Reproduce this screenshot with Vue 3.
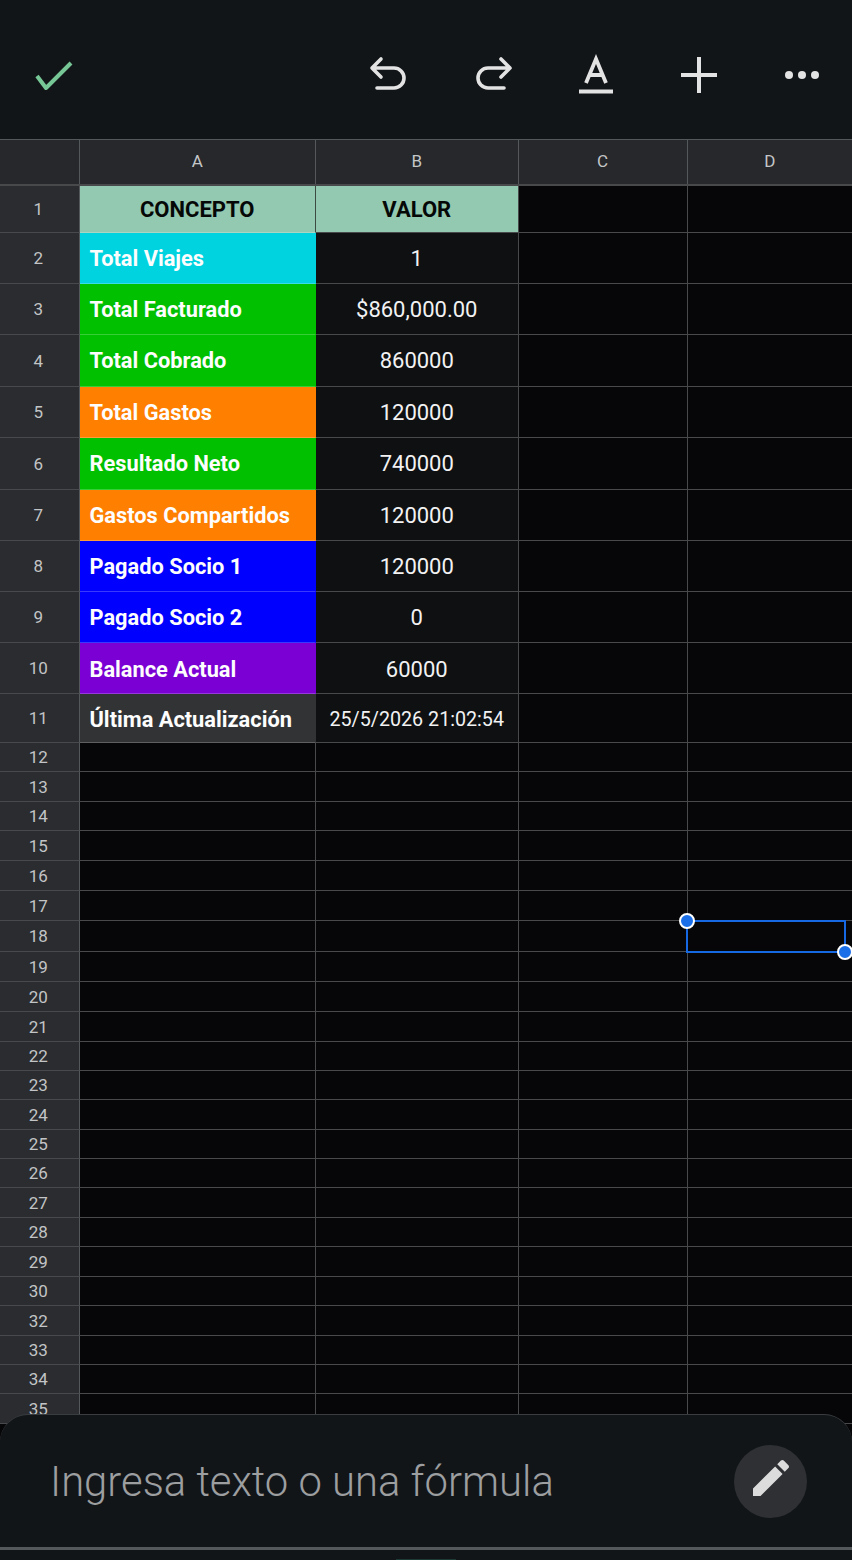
<script setup>
const columns = ['A', 'B', 'C', 'D']
const data = [
  { n: 1, h: 47, a: 'CONCEPTO', b: 'VALOR', tone: 'head' },
  { n: 2, h: 51, a: 'Total Viajes', b: '1', tone: 'cyan' },
  { n: 3, h: 51, a: 'Total Facturado', b: '$860,000.00', tone: 'green' },
  { n: 4, h: 52, a: 'Total Cobrado', b: '860000', tone: 'green' },
  { n: 5, h: 51, a: 'Total Gastos', b: '120000', tone: 'orange' },
  { n: 6, h: 52, a: 'Resultado Neto', b: '740000', tone: 'green' },
  { n: 7, h: 51, a: 'Gastos Compartidos', b: '120000', tone: 'orange' },
  { n: 8, h: 51, a: 'Pagado Socio 1', b: '120000', tone: 'blue' },
  { n: 9, h: 51, a: 'Pagado Socio 2', b: '0', tone: 'blue' },
  { n: 10, h: 51, a: 'Balance Actual', b: '60000', tone: 'purple', lower: true },
  { n: 11, h: 49, a: 'Última Actualización', b: '25/5/2026 21:02:54', tone: 'grey', small: true, lower: true }
]
const empty = [
  [12, 29], [13, 30], [14, 29], [15, 30], [16, 30], [17, 30], [18, 31], [19, 30], [20, 30], [21, 30],
  [22, 29], [23, 29], [24, 30], [25, 29], [26, 29], [27, 30], [28, 29], [29, 30], [30, 29], [32, 30],
  [33, 29], [34, 29], [35, 30]
].map(([n, h]) => ({ n, h }))
</script>

<template>
  <div class="page">
    <header class="toolbar">
      <svg class="tool-icons" width="852" height="139" viewBox="0 0 852 139" fill="none" stroke-linecap="round" stroke-linejoin="round">
        <path d="M37 76 L46 88 L71 63" stroke="#76c795" stroke-width="4" stroke-linecap="butt" />
        <g stroke="#e3e3e3" stroke-width="3.6">
          <path d="M381 59 L372 68 L381 77 M372 68 H394 A10 10 0 0 1 394 88 H377" />
          <path d="M501 59 L510 68 L501 77 M510 68 H488 A10 10 0 0 0 488 88 H504" />
          <path d="M586 83 L596 59 L606 83 M589 75 H603" stroke-width="3.8" stroke-linecap="butt" stroke-linejoin="miter" />
          <path d="M579 91.500 H613" stroke-width="4" stroke-linecap="butt" />
          <path d="M681 75 H717 M699 57 V93" stroke-width="4" stroke-linecap="butt" />
        </g>
        <g fill="#e3e3e3">
          <circle cx="789" cy="75" r="4" />
          <circle cx="802" cy="75" r="4" />
          <circle cx="815" cy="75" r="4" />
        </g>
      </svg>
    </header>

    <section class="sheet">
      <div class="row col-row">
        <div class="corner"></div>
        <div v-for="c in columns" :key="c" class="col-head">{{ c }}</div>
      </div>

      <div v-for="r in data" :key="r.n" class="row" :class="{ lower: r.lower }" :style="{ height: r.h + 'px' }">
        <div class="row-head">{{ r.n }}</div>
        <div class="cell cell-a" :class="r.tone">{{ r.a }}</div>
        <div class="cell cell-b" :class="[{ small: r.small }, r.tone === 'head' ? 'head' : '']">{{ r.b }}</div>
        <div class="cell blank"></div>
        <div class="cell blank"></div>
      </div>

      <div v-for="r in empty" :key="r.n" class="row" :style="{ height: r.h + 'px' }">
        <div class="row-head">{{ r.n }}</div>
        <div class="cell blank"></div>
        <div class="cell blank"></div>
        <div class="cell blank"></div>
        <div class="cell blank"></div>
      </div>
    </section>

    <div class="selection">
      <span class="handle handle-start"></span>
      <span class="handle handle-end"></span>
    </div>

    <footer class="composer">
      <div class="input-row">
        <span class="placeholder">Ingresa texto o una fórmula</span>
        <button class="edit" type="button" aria-label="Editar">
          <svg width="48" height="48" viewBox="0 0 24 24" fill="#dcdcdc">
            <path d="M3 17.25V21h3.75L17.81 9.94l-3.75-3.75L3 17.25zM20.71 7.04c.39-.39.39-1.02 0-1.41l-2.34-2.34c-.39-.39-1.02-.39-1.41 0l-1.83 1.83 3.75 3.75 1.83-1.83z" />
          </svg>
        </button>
      </div>
      <div class="home-strip"><span class="home-pill"></span></div>
    </footer>
  </div>
</template>

<style>
html, body { margin: 0; background: #060608; }
</style>

<style scoped>
.page {
  position: relative;
  width: 852px;
  height: 1560px;
  overflow: hidden;
  background: #060608;
  font-family: Roboto, "Liberation Sans", sans-serif;
  color: #f2f2f2;
}
.toolbar {
  height: 139px;
  background: #121518;
}
.tool-icons { display: block; }
.sheet {
  display: flex;
  flex-direction: column;
  border-top: 1.5px solid #55585a;
}
.row {
  display: grid;
  grid-template-columns: 79.500px 236.500px 202.500px 169px 164.500px;
  box-sizing: border-box;
}
.col-row {
  height: 46px;
  background: #26282b;
  border-bottom: 2px solid #47494b;
}
.corner, .col-head {
  border-right: 1.500px solid #55585a;
  box-sizing: border-box;
}
.corner { background: #26282b; }
.col-head {
  display: flex;
  align-items: center;
  justify-content: center;
  padding-bottom: 3px;
  font-size: 17px;
  color: #c4c6c8;
  background: #26282b;
}
.col-head:last-child { border-right: 0; }
.row-head {
  display: flex;
  align-items: center;
  justify-content: center;
  padding-right: 2px;
  box-sizing: border-box;
  font-size: 17px;
  color: #c2c4c6;
  background: #2a2c2f;
  border-right: 1.500px solid #55585a;
  border-bottom: 1.500px solid #47494b;
}
.cell {
  display: flex;
  align-items: center;
  box-sizing: border-box;
  min-width: 0;
  white-space: nowrap;
  border-right: 1.500px solid #47494b;
  border-bottom: 1.500px solid #47494b;
}
.cell:last-child { border-right: 0; }
.lower .cell { padding-top: 2px; }
.cell-a {
  padding-left: 10px;
  font-size: 21.800px;
  font-weight: 700;
  color: #fdfdfd;
  border-right-color: transparent;
  border-bottom-color: rgba(255, 255, 255, 0.22);
}
.cell-b {
  justify-content: center;
  font-size: 22px;
  color: #f2f2f2;
  background: #0e1012;
}
.cell-b.small { font-size: 19.700px; }
.blank { background: #060608; }
.head {
  justify-content: center;
  padding-left: 0;
  background: #93c9b1;
  color: #050807;
  font-weight: 700;
  font-size: 22px;
}
.cell-a.head { border-right-color: #3c4a44; }
.cyan { background: #00d3e0; }
.green { background: #00c000; }
.orange { background: #ff7f00; }
.blue { background: #0000ff; }
.purple { background: #7a00d4; }
.grey { background: #323335; }
.selection {
  position: absolute;
  left: 685.700px;
  top: 920px;
  width: 160px;
  height: 33px;
  box-sizing: border-box;
  border: 2px solid #1668e3;
}
.handle {
  position: absolute;
  width: 16px;
  height: 16px;
  box-sizing: border-box;
  border-radius: 50%;
  background: #1a6fe8;
  border: 2.500px solid #fff;
}
.handle-start { left: -9px; top: -9.300px; }
.handle-end { right: -9px; bottom: -9px; }
.composer {
  position: absolute;
  left: 0;
  right: 0;
  bottom: 0;
  height: 146px;
  box-sizing: border-box;
  display: flex;
  flex-direction: column;
  background: #121518;
  border-top: 1.500px solid #3a3d40;
  border-radius: 28px 28px 0 0;
}
.input-row {
  flex: 1;
  display: flex;
  align-items: center;
  justify-content: space-between;
  padding: 0 45px 0 50px;
  border-bottom: 3px solid #55585b;
}
.placeholder {
  padding-top: 1px;
  font-size: 41.800px;
  font-weight: 300;
  color: #9c9ea0;
}
.edit {
  width: 73px;
  height: 73px;
  padding: 0 0 6px;
  display: flex;
  align-items: center;
  justify-content: center;
  border: 0;
  border-radius: 50%;
  background: #2e3033;
}
.home-strip {
  height: 10px;
  display: flex;
  align-items: flex-end;
  justify-content: center;
}
.home-pill {
  width: 60px;
  height: 1px;
  background: #1e3a36;
}
</style>
